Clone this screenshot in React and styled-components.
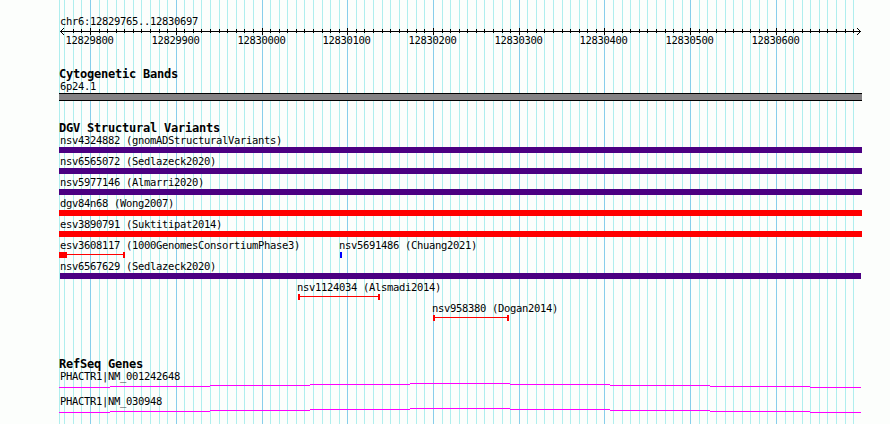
import styled, { createGlobalStyle } from "styled-components";

const START = 12829765;
const END = 12830697;
const SCALE = 800 / (END - START + 1);
const LEFT = 60;

const toX = (pos) => LEFT + Math.round((pos - START) * SCALE);

const marks = [];
for (let pos = 12829770; pos <= 12830690; pos += 10) {
  marks.push({ pos, x: toX(pos), major: pos % 100 === 0 });
}

const INDIGO = "#4b0082";
const RED = "#ff0000";
const BLUE = "#0000ff";

// start and end are canvas columns, features in one row share its height
const variantRows = [
  [{ name: "nsv4324882 (gnomADStructuralVariants)", start: 59, end: 862, color: INDIGO }],
  [{ name: "nsv6565072 (Sedlazeck2020)", start: 59, end: 862, color: INDIGO }],
  [{ name: "nsv5977146 (Almarri2020)", start: 59, end: 862, color: INDIGO }],
  [{ name: "dgv84n68 (Wong2007)", start: 59, end: 862, color: RED }],
  [{ name: "esv3890791 (Suktitipat2014)", start: 59, end: 862, color: RED }],
  [
    { name: "esv3608117 (1000GenomesConsortiumPhase3)", start: 59, end: 125, cap: 8, color: RED, range: true },
    { name: "nsv5691486 (Chuang2021)", start: 340, end: 342, labelShift: -1, color: BLUE },
  ],
  [{ name: "nsv6567629 (Sedlazeck2020)", start: 60, end: 861, labelShift: 0, color: INDIGO }],
  [{ name: "nsv1124034 (Alsmadi2014)", start: 298, end: 380, labelShift: -1, color: RED, range: true }],
  [{ name: "nsv958380 (Dogan2014)", start: 433, end: 509, labelShift: -1, color: RED, range: true }],
];

const genes = ["PHACTR1|NM_001242648", "PHACTR1|NM_030948"];

const GlobalStyle = createGlobalStyle`
  body {
    margin: 0;
    background: #fcfefc;
  }
`;

const Browser = styled.main`
  position: relative;
  width: 890px;
  height: 424px;
  overflow: hidden;
  color: #000;
  font-family: "DejaVu Sans Mono", monospace;
`;

const Guides = styled.svg`
  position: absolute;
  inset: 0;
  z-index: -1;
  shape-rendering: crispEdges;
`;

const Label = styled.span`
  display: block;
  height: 13px;
  padding-left: ${({ $indent = 0 }) => $indent}px;
  font-size: 10.5px;
  line-height: 12px;
  letter-spacing: -0.321px;
  white-space: pre;
`;

const Title = styled.h2`
  margin: 0;
  height: 13px;
  padding-left: 59px;
  font-size: 12px;
  font-weight: bold;
  line-height: 15px;
  letter-spacing: -0.224px;
  white-space: pre;
`;

const RulerTrack = styled.header`
  height: 53px;
  padding-top: 15px;
  box-sizing: border-box;
`;

const RulerLine = styled.svg`
  display: block;
  height: 7px;
  shape-rendering: crispEdges;
`;

const RulerLabels = styled.div`
  display: flex;
  gap: 38px;
  padding-left: 65.5px;
`;

const RulerLabel = styled(Label)`
  width: 48px;
  margin-left: ${({ $shift }) => $shift}px;
  line-height: 10px;
`;

const Track = styled.section`
  padding-top: ${({ $top }) => $top}px;
`;

const Band = styled.div`
  height: 6px;
  width: 803px;
  margin: 0 0 0 59px;
  border: solid #000;
  border-width: 1px 0;
  background: #848284;
`;

const VariantRow = styled.div`
  display: grid;
  height: 21px;
`;

const Feature = styled.div`
  grid-area: 1 / 1;
  width: ${({ $width }) => $width}px;
  margin-left: ${({ $start }) => $start}px;

  & > ${Label} {
    margin-left: ${({ $shift }) => $shift}px;
  }
`;

const Bar = styled.div`
  height: 6px;
  background: ${({ $color }) => $color};
`;

const Range = styled.div`
  display: flex;
  height: 6px;
`;

const Cap = styled.i`
  width: ${({ $width }) => $width}px;
  height: 6px;
  background: ${({ $color }) => $color};
`;

const Stem = styled.i`
  flex: 1;
  height: 1px;
  margin-top: 2px;
  background: ${({ $color }) => $color};
`;

const Gene = styled.div`
  height: 25px;
`;

const Intron = styled.svg`
  display: block;
  height: 7px;
  shape-rendering: crispEdges;
`;

function GridLines() {
  return (
    <Guides width="890" height="424">
      <rect x="59" width="1" height="424" fill="#afeeee" />
      {marks.map(({ pos, x, major }) => (
        <rect key={pos} x={x} width="1" height="424" fill={major ? "#87ceeb" : "#afeeee"} />
      ))}
    </Guides>
  );
}

function Ruler() {
  return (
    <RulerTrack>
      <Label $indent={60}>chr6:12829765..12830697</Label>
      <RulerLine width="890">
        <rect x="60" y="3" width="801" height="1" />
        {marks.slice(1).map(({ pos, x, major }) => (
          <rect key={pos} x={x} y={major ? 0 : 1} width="1" height={major ? 7 : 4} />
        ))}
        <path d="M60 3h1v1h-1zM61 2h1v3h-1zM62 1h1v1h-1zM62 5h1v1h-1zM63 0h1v1h-1zM63 6h1v1h-1z" />
        <path d="M860 3h1v1h-1zM859 2h1v3h-1zM858 1h1v1h-1zM858 5h1v1h-1zM857 0h1v1h-1zM857 6h1v1h-1z" />
      </RulerLine>
      <RulerLabels>
        {marks
          .filter(({ major }) => major)
          .map(({ pos, x }, i) => (
            <RulerLabel key={pos} $shift={i === 0 ? 0 : x - toX(pos - 100) - 86}>
              {pos}
            </RulerLabel>
          ))}
      </RulerLabels>
    </RulerTrack>
  );
}

function Variant({ name, start, end, color, range, cap = 2, labelShift = 1 }) {
  return (
    <Feature $start={start} $width={end - start} $shift={labelShift}>
      <Label>{name}</Label>
      {range ? (
        <Range>
          <Cap $width={cap} $color={color} />
          <Stem $color={color} />
          <Cap $width={2} $color={color} />
        </Range>
      ) : (
        <Bar $color={color} />
      )}
    </Feature>
  );
}

function GeneModel({ name }) {
  return (
    <Gene>
      <Label $indent={60}>{name}</Label>
      <Intron width="890">
        <path
          fill="#ff00ff"
          d="M59 4h51v1h-51zM110 3h100v1h-100zM210 2h100v1h-100zM310 1h100v1h-100zM410 0h100v1h-100zM510 1h100v1h-100zM610 2h100v1h-100zM710 3h100v1h-100zM810 4h51v1h-51z"
        />
      </Intron>
    </Gene>
  );
}

function App() {
  return (
    <Browser>
      <GlobalStyle />
      <GridLines />
      <Ruler />
      <Track $top={14}>
        <Title>Cytogenetic Bands</Title>
        <Label $indent={60}>6p24.1</Label>
        <Band />
      </Track>
      <Track $top={20}>
        <Title>DGV Structural Variants</Title>
        {variantRows.map((row) => (
          <VariantRow key={row[0].name}>
            {row.map((variant) => (
              <Variant key={variant.name} {...variant} />
            ))}
          </VariantRow>
        ))}
      </Track>
      <Track $top={34}>
        <Title>RefSeq Genes</Title>
        {genes.map((name) => (
          <GeneModel key={name} name={name} />
        ))}
      </Track>
    </Browser>
  );
}

export default App;
